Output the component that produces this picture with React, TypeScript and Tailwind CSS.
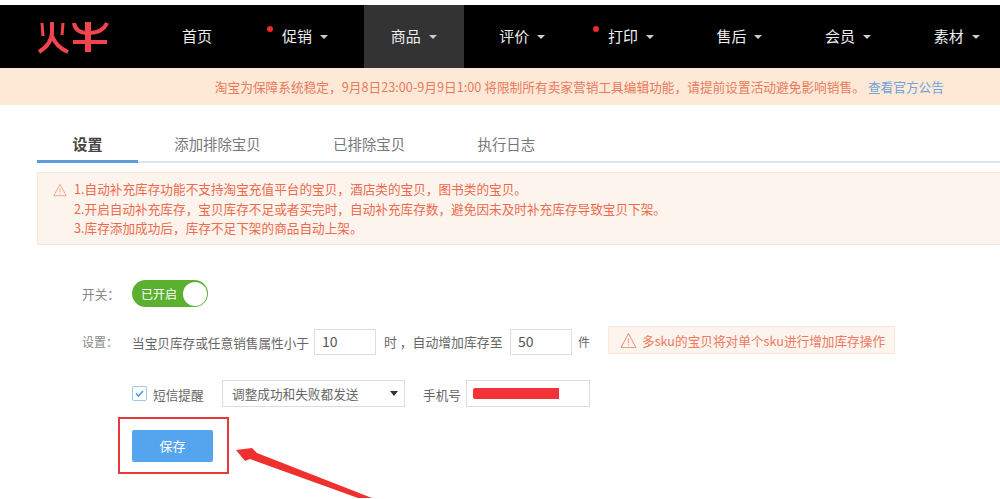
const font = { fontFamily: '"Noto Sans CJK SC", "Liberation Sans", sans-serif' };

const NAV_ITEMS = [
  { label: '首页', caret: false, dot: false, active: false, first: true },
  { label: '促销', caret: true, dot: true, active: false, first: false },
  { label: '商品', caret: true, dot: false, active: true, first: false },
  { label: '评价', caret: true, dot: false, active: false, first: false },
  { label: '打印', caret: true, dot: true, active: false, first: false },
  { label: '售后', caret: true, dot: false, active: false, first: false },
  { label: '会员', caret: true, dot: false, active: false, first: false },
  { label: '素材', caret: true, dot: false, active: false, first: false },
];

const TABS = ['设置', '添加排除宝贝', '已排除宝贝', '执行日志'];

function Logo() {
  return (
    <svg width="72" height="34" viewBox="0 0 72 34" fill="none" stroke="#f2444f" strokeWidth="4" className="block">
      <path d="M5 3 L6 16" strokeWidth="3" />
      <path d="M15 2 L15 12 C15 20 10 27 2 32" />
      <path d="M15 16 C18 24 24 29 31 32" />
      <path d="M26 3 L25 15" strokeWidth="3" />
      <path d="M37 3 C38 10 43 13 51 13 C60 13 67 10 70 3" />
      <path d="M51 2 L51 32" strokeWidth="6" />
      <path d="M36 22 L70 22" />
    </svg>
  );
}

function WarnIcon({ size }: { size: number }) {
  return (
    <svg width={size} height={size} viewBox="0 0 16 16" fill="none" stroke="#ee9a88" strokeWidth="1" className="block shrink-0">
      <path d="M8 1.5 L15 14.5 L1 14.5 Z" strokeLinejoin="round" />
      <path d="M8 6 L8 10.5 M8 11.8 L8 12.8" />
    </svg>
  );
}

function NavBar() {
  return (
    <div className="flex h-[63px] bg-black">
      <div className="w-[155px] shrink-0 pl-[37px] pt-[15px]">
        <Logo />
      </div>
      <div className="flex gap-[8.6px]">
        {NAV_ITEMS.map((item) => (
          <div
            key={item.label}
            className={`relative flex items-center pb-[2px] pl-[27px] text-[15px] text-[#eeeeee] ${item.first ? 'w-[91.5px]' : 'w-[100px]'} ${item.active ? 'bg-[#333333]' : ''}`}
          >
            {item.dot && <span className="absolute left-[12px] top-[21px] h-[6px] w-[6px] rounded-full bg-[#ee2a2a]" />}
            <span className="leading-none">{item.label}</span>
            {item.caret && (
              <span className="ml-[8px] mt-[2px] h-0 w-0 border-x-[4px] border-t-[4px] border-x-transparent border-t-[#cccccc]" />
            )}
          </div>
        ))}
      </div>
    </div>
  );
}

function Tabs() {
  return (
    <div className="ml-[37px] mt-[20px] flex h-[38px] border-b-2 border-[#dde6ee]">
      {TABS.map((tab, i) => (
        <div
          key={tab}
          className={`-mb-[2px] flex items-center ${
            i === 0
              ? 'w-[101px] justify-center border-b-[3px] border-[#5b9ddb] pt-[3px] text-[15px] font-bold text-[#444444]'
              : 'px-[36.25px] text-[14.4px] text-[#777777]'
          }`}
        >
          {tab}
        </div>
      ))}
    </div>
  );
}

function Notice() {
  return (
    <div className="ml-[37px] mt-[9px] flex h-[73px] border border-r-0 border-[#fbe3d6] bg-[#fdf4ee] pl-[15px] pt-[6px] text-[12.65px] leading-[19.5px] text-[#ee6a4c]">
      <div className="pt-[4px] pr-[7px]">
        <WarnIcon size={14} />
      </div>
      <div>
        <p>1.自动补充库存功能不支持淘宝充值平台的宝贝，酒店类的宝贝，图书类的宝贝。</p>
        <p>2.开启自动补充库存，宝贝库存不足或者买完时，自动补充库存数，避免因未及时补充库存导致宝贝下架。</p>
        <p>3.库存添加成功后，库存不足下架的商品自动上架。</p>
      </div>
    </div>
  );
}

function NumberBox({ value }: { value: string }) {
  return (
    <div className="mt-[3px] flex h-[26px] w-[62px] items-center border border-[#dddddd] pl-[7px] text-[14px] text-[#555555]">
      {value}
    </div>
  );
}

function Form() {
  return (
    <div className="pl-[82px] text-[12.65px] text-[#666666]">
      <div className="mt-[35px] flex h-[27px] items-center">
        <span className="w-[50px] text-[#888888]">开关：</span>
        <div className="flex h-[27px] w-[76px] items-center justify-between rounded-full bg-[#5cb030] pl-[9px] pr-[1.5px] text-[12px] text-white">
          <span>已开启</span>
          <span className="h-[24px] w-[24px] rounded-full bg-white" />
        </div>
      </div>

      <div className="mt-[19px] flex h-[28px] items-center">
        <span className="mt-[4px] w-[50px] text-[12px] text-[#888888]">设置：</span>
        <span className="mt-[4px] w-[182px]">当宝贝库存或任意销售属性小于</span>
        <NumberBox value="10" />
        <span className="ml-[8px] mt-[4px] w-[126px] text-[12.85px]">时 ，自动增加库存至</span>
        <NumberBox value="50" />
        <span className="ml-[6px] mt-[4px] text-[12px]">件</span>
        <div className="ml-[18px] flex h-[28px] w-[287px] items-center gap-[5px] border border-[#fbe6d8] bg-[#fdf4ee] pl-[11px] text-[12.65px] text-[#ee7a62]">
          <WarnIcon size={17} />
          <span>多sku的宝贝将对单个sku进行增加库存操作</span>
        </div>
      </div>

      <div className="mt-[25px] flex h-[28px] items-center pl-[50px]">
        <span className="flex h-[15px] w-[15px] items-center justify-center rounded-[2px] border border-[#9cc6ee]">
          <svg width="11" height="11" viewBox="0 0 11 11" fill="none" stroke="#4f9ee6" strokeWidth="1.6">
            <path d="M2 5.5 L4.5 8 L9 3" />
          </svg>
        </span>
        <span className="ml-[6px] mt-[3px] w-[69px]">短信提醒</span>
        <div className="flex h-[27px] w-[183px] items-center justify-between border border-[#dddddd] pl-[9px] pr-[6px]">
          <span>调整成功和失败都发送</span>
          <span className="h-0 w-0 border-x-[4px] border-t-[5px] border-x-transparent border-t-[#333333]" />
        </div>
        <span className="ml-[18px] mt-[2px] w-[43px]">手机号</span>
        <div className="mt-[1px] flex h-[27px] w-[124px] items-center border border-[#dddddd] pl-[6px]">
          <span className="h-[11px] w-[86px] rounded-l-[2px] bg-[#f53238]" />
        </div>
      </div>

      <div className="mt-[23px] pl-[50px]">
        <button className="block h-[32px] w-[81px] rounded-[2px] bg-[#55a4ee] text-[13px] text-white">保存</button>
      </div>
    </div>
  );
}

function Annotations() {
  return (
    <>
      <div className="absolute left-[118px] top-[417px] h-[57px] w-[111px] border-2 border-[#e8393a]" />
      <svg width="150" height="60" viewBox="0 0 150 60" className="absolute left-[230px] top-[440px]">
        <path d="M6 10 L22 8 L27 13 L142 58 L128 58 L20 19 L15 21 Z" fill="#f0302f" />
      </svg>
    </>
  );
}

export default function App() {
  return (
    <div className="relative h-[499px] w-[1000px] overflow-hidden bg-white pt-[5px]" style={font}>
      <NavBar />
      <div className="flex h-[37px] items-center justify-end bg-[#fde9d5] pr-[56px] text-[12.7px] text-[#ea7a5e]">
        <span>淘宝为保障系统稳定，9月8日23:00-9月9日1:00 将限制所有卖家营销工具编辑功能，请提前设置活动避免影响销售。</span>
        <span className="ml-[3px] text-[#6fa3dc]">查看官方公告</span>
      </div>
      <Tabs />
      <Notice />
      <Form />
      <Annotations />
    </div>
  );
}
